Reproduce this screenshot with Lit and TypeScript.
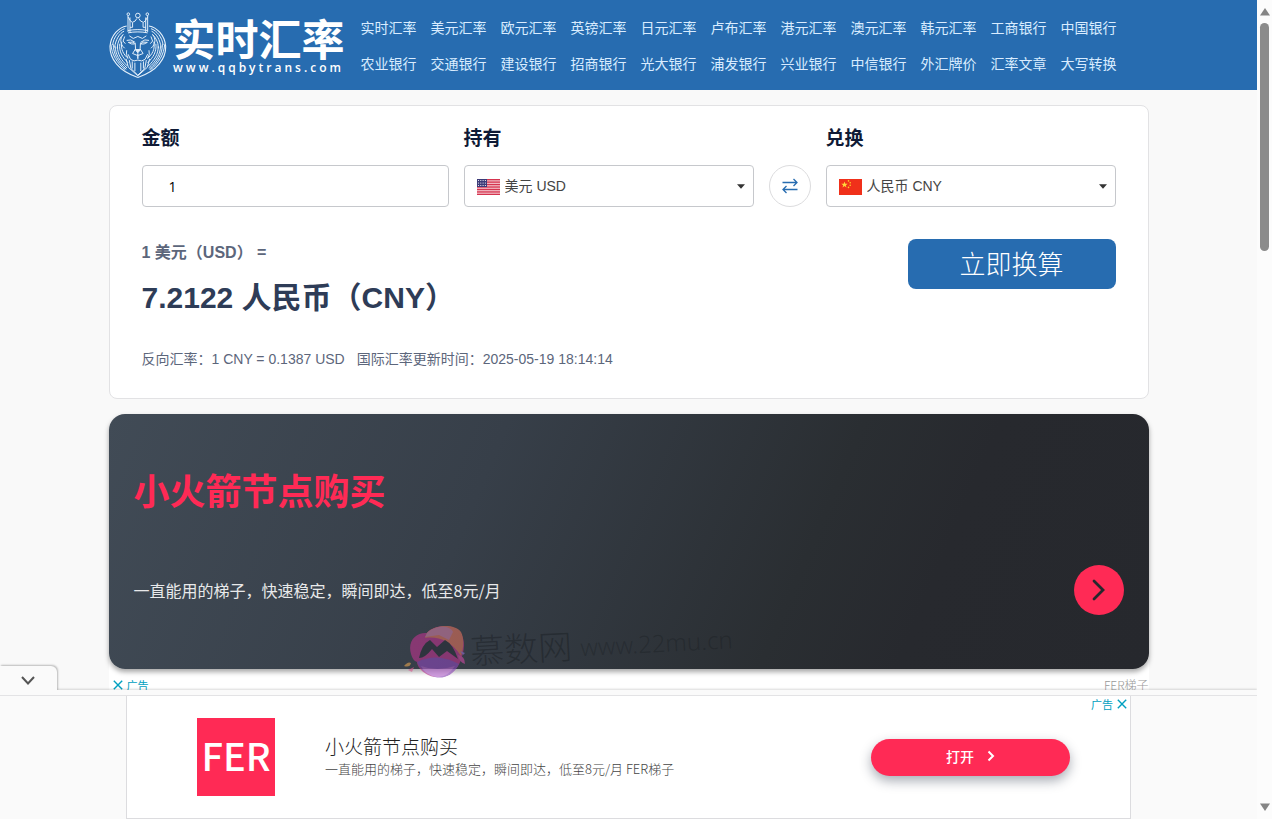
import { LitElement, html, css, svg } from "lit";
import { customElement, state } from "lit/decorators.js";

const NAV = [
  "实时汇率", "美元汇率", "欧元汇率", "英镑汇率", "日元汇率", "卢布汇率", "港元汇率", "澳元汇率", "韩元汇率", "工商银行", "中国银行",
  "农业银行", "交通银行", "建设银行", "招商银行", "光大银行", "浦发银行", "兴业银行", "中信银行", "外汇牌价", "汇率文章", "大写转换",
];

// Left half of the lion; the right half is the same drawing mirrored.
const lionHalf = svg`
  <path d="M88 98V52M82 96V46M88 82h8V68M82 92q14-3 30-3M82 99q14-3 30-3"/>
  <path d="M82 50q6 14 13 17 10-2 14-12"/>
  <circle cx="83" cy="42" r="4"/>
  <path d="M78 78C54 82 30 106 27 140C26 176 52 216 112 235" stroke-width="3.4"/>
  <path d="M72 86C54 92 38 112 35 136M70 94C56 100 44 120 41 144M68 103C58 112 50 126 49 146"/>
  <path d="M30 134c2 30 18 58 44 78M37 134c0 28 14 54 40 76M43 140c0 24 14 46 36 66M50 140c-1 24 12 42 30 60M57 132c-3 24 8 42 25 58M63 126c-4 24 5 38 20 52"/>
  <path d="M66 106c-8 10-8 22 0 34l6 6M72 110l-5 14 7 8"/>
  <path d="M78 122q12-6 26 6M83 128q10 7 19 5l-4-6z"/>
  <path d="M104 130l1 18-9 14 15 6M86 108l12 8 14-6"/>
  <path d="M112 162v16M112 182q-12 6-22-2l-8-16M78 152q-4 14 4 24"/>
  <path d="M86 182l5 26 21 20M95 186v22M103 190v26M76 178l7 26 29 26"/>`;

const lion = html`<svg class="lion" viewBox="24 34 177 204" aria-hidden="true">
  <g fill="none" stroke="#e6f1fb" stroke-width="3" stroke-linejoin="round">
    ${lionHalf}
    <g transform="translate(224 0) scale(-1 1)">${lionHalf}</g>
    <circle cx="112" cy="46" r="7"/>
    <path d="M104 150h16l-8 10z" fill="#e6f1fb"/>
  </g>
</svg>`;

const usFlag = html`<svg class="flag" viewBox="0 0 23 16" aria-hidden="true">
  <rect width="23" height="16" fill="#f4c4cc"/>
  ${[0, 1, 2, 3, 4, 5, 6].map((i) => svg`<rect y=${i * 2.46} width="23" height="1.3" fill="#d5344f"/>`)}
  <rect width="10" height="8" fill="#3c3b78"/>
  ${[1.5, 4, 6.5].map((y) => [1.5, 3.8, 6.1, 8.4].map((x) => svg`<circle cx=${x} cy=${y} r=".6" fill="#fff"/>`))}
</svg>`;

const cnFlag = html`<svg class="flag" viewBox="0 0 23 16" aria-hidden="true">
  <rect width="23" height="16" fill="#f0301a"/>
  <path d="M5.5 2.4l.8 2.3h2.4l-1.9 1.5.7 2.3-2-1.4-2 1.4.7-2.3-1.9-1.5h2.4z" fill="#ffd93a"/>
  <g fill="#ffc928"><circle cx="9.5" cy="1.9" r=".8"/><circle cx="11.2" cy="3.8" r=".8"/><circle cx="11.2" cy="6.3" r=".8"/><circle cx="9.5" cy="8.4" r=".8"/></g>
</svg>`;

const cross = html`<svg class="cross" viewBox="0 0 10 10" aria-hidden="true"><path d="M.8.8l8.4 8.4M9.2.8L.8 9.2" fill="none" stroke="#00a0c0" stroke-width="1.4"/></svg>`;

@customElement("app-root")
export class AppRoot extends LitElement {
  @state() private amount = "1";

  static styles = css`
    :host {
      display: grid;
      grid-template-columns: minmax(0, 1fr) 15px;
      position: relative;
      height: 100vh;
      overflow: hidden;
      background: #f9f9f9;
      color: #333;
      font: 14px/20px "Liberation Sans", "Noto Sans CJK SC", sans-serif;
    }
    * { box-sizing: border-box; }
    h2, p { margin: 0; }
    a { color: inherit; text-decoration: none; }
    button { font: inherit; cursor: pointer; }
    .page { min-width: 0; overflow: hidden; }
    .wrap { max-width: 1040px; margin: 0 auto; }

    header { background: #276cb0; }
    .bar { display: flex; min-height: 90px; }
    .brand { display: flex; align-items: flex-start; flex: none; padding-top: 11px; color: #fff; }
    .lion { width: 58px; height: 68px; }
    .words { display: flex; flex-direction: column; align-items: center; padding: 4px 0 0 6px; }
    .name { font: 700 43px/44px "Noto Sans CJK SC", sans-serif; }
    .domain { font: 600 12px/14px "Open Sans", sans-serif; letter-spacing: 3px; margin-top: 2px; }
    nav { display: flex; flex-wrap: wrap; align-content: flex-start; column-gap: 14px; padding: 10px 0 0 16px; }
    nav a { color: #d9ecff; font-size: 14px; line-height: 36px; }

    .card { margin-top: 15px; padding: 18px 32px 29px; border: 1px solid #e2e2e4; border-radius: 8px; background: #fff; }
    .fields { display: grid; grid-template-columns: minmax(0, 1fr) 290px 42px 290px; column-gap: 15px; align-items: end; }
    .field { display: grid; }
    .field label { color: #0f1a36; font-size: 19px; font-weight: 700; line-height: 30px; margin-bottom: 11px; }
    .field input, .field select {
      width: 100%; height: 42px; border: 1px solid #c6c8cc; border-radius: 4px; background: #fff;
      font: inherit; appearance: none; outline: none;
    }
    .field input { padding: 0 26px; color: #000; font-family: "Open Sans", sans-serif; }
    .field select { padding: 0 32px 0 40px; color: #444; }
    .box { position: relative; display: grid; }
    .flag { position: absolute; left: 13px; top: 14px; width: 23px; height: 16px; pointer-events: none; }
    .caret { position: absolute; right: 9px; top: 19px; width: 8px; height: 5px; pointer-events: none; }
    .swap { display: grid; place-items: center; width: 42px; height: 42px; padding: 0; border: 1px solid #dcdcde; border-radius: 50%; background: #fff; }
    .swap svg { width: 16px; height: 16px; }
    .result { display: flex; justify-content: space-between; align-items: flex-start; margin-top: 32px; }
    .from { color: #5c667b; font-size: 16px; font-weight: 700; line-height: 28px; }
    .to { color: #2e3c57; font-size: 30px; font-weight: 700; line-height: 44px; margin-top: 9px; }
    .rate { display: flex; flex-wrap: wrap; column-gap: 12px; margin-top: 29px; color: #5c667b; }
    .convert { width: 208px; height: 50px; padding: 0 0 2px; border: 0; border-radius: 8px; background: #276cb0; color: #fff; font: 300 26px/48px "Noto Sans CJK SC", sans-serif; }

    .promo { margin-top: 15px; background: #fff; border-radius: 16px 16px 0 0; font-family: "Noto Sans CJK SC", sans-serif; }
    .banner {
      position: relative; display: flex; flex-direction: column; min-height: 255px; padding: 48px 25px 20px; border-radius: 16px;
      background: linear-gradient(113deg, #414b56 0%, #373f49 35%, #2a2e32 66%, #27292e 78%, #26282d 100%);
      box-shadow: 0 3px 5px rgba(0, 0, 0, .35); color: #fff;
    }
    .banner h2 { color: #ff2a55; font-size: 36px; font-weight: 700; line-height: 54px; }
    .row { display: flex; justify-content: space-between; align-items: center; margin-top: 49px; font-size: 16px; color: #e8e9ea; }
    .go { display: grid; place-items: center; width: 50px; height: 50px; border-radius: 50%; background: #ff2a55; }
    .go svg { width: 14px; height: 22px; }
    .mark { position: absolute; left: 294px; top: 206px; width: 340px; height: 60px; pointer-events: none; }
    .meta { display: flex; justify-content: space-between; align-items: flex-start; padding: 8px 0 12px 4px; }
    .meta .by { color: #999; font-size: 12px; font-weight: 300; line-height: 16px; }
    .adtag { display: flex; align-items: center; gap: 4px; color: #00a0c0; font: 11px/16px "Noto Sans CJK SC", sans-serif; }
    .cross { width: 10px; height: 10px; }

    .dock { position: absolute; left: 0; right: 15px; bottom: 0; background: #fafafa; padding-top: 5px; box-shadow: 0 -1px 2px rgba(0, 0, 0, .15); clip-path: inset(-40px 0 0 0); }
    .toggle { position: absolute; left: 0; top: -24px; width: 57px; height: 25px; display: grid; place-items: center; padding: 4px 1px 0 0; border: 0; border-radius: 0 6px 0 0; background: #fafafa; box-shadow: 1px -1px 2px rgba(0, 0, 0, .25); clip-path: inset(-4px -4px 1px 0); }
    .toggle svg { width: 14px; height: 9px; }
    .slot { border-top: 1px solid #e3e3e5; }
    .strip {
      position: relative; display: flex; align-items: center; max-width: 1005px; height: 123px; margin: 0 auto; padding: 0 60px 0 70px;
      border: 1px solid #dcdcdf; border-top: 0; background: #fff; font-family: "Noto Sans CJK SC", sans-serif;
    }
    .tile { display: grid; place-items: center; flex: none; width: 78px; height: 78px; padding-bottom: 4px; background: #ff2a55; color: #fff; font-size: 38px; font-weight: 500; line-height: 74px; }
    .copy { flex: 1; padding: 0 0 2px 50px; }
    .copy h2 { color: #222; font-size: 19px; font-weight: 300; line-height: 26px; }
    .copy p { color: #444; font-size: 13px; font-weight: 300; line-height: 20px; }
    .open { display: flex; align-items: center; justify-content: center; gap: 13px; width: 199px; height: 37px; padding-bottom: 2px; border-radius: 19px; background: #ff2a55; color: #fff; font-weight: 500; box-shadow: 0 5px 12px rgba(40, 50, 70, .4); }
    .open svg { width: 8px; height: 12px; }
    .strip .adtag { position: absolute; right: 3px; top: 0; }

    .scroll { display: flex; flex-direction: column; align-items: center; padding: 8px 0; background: #fcfcfc; }
    .scroll svg { width: 10px; height: 8px; fill: #858585; }
    .thumb { width: 9px; height: 228px; margin: 7px 0 auto; border-radius: 5px; background: #8b8b8b; }
  `;

  private picker(id: string, label: string, flag: unknown, option: string) {
    return html`<div class="field">
      <label for=${id}>${label}</label>
      <div class="box">
        <select id=${id}><option>${option}</option></select>
        ${flag}
        <svg class="caret" viewBox="0 0 9 5" aria-hidden="true"><path d="M0 0h9L4.5 5z" fill="#333"/></svg>
      </div>
    </div>`;
  }

  render() {
    return html`
      <div class="page">
        <header>
          <div class="wrap bar">
            <a class="brand" href="#">${lion}
              <span class="words"><span class="name">实时汇率</span><span class="domain">www.qqbytrans.com</span></span>
            </a>
            <nav>${NAV.map((n) => html`<a href="#">${n}</a>`)}</nav>
          </div>
        </header>
        <main class="wrap">
          <section class="card">
            <div class="fields">
              <div class="field">
                <label for="amount">金额</label>
                <input id="amount" type="text" .value=${this.amount}
                  @input=${(e: Event) => (this.amount = (e.target as HTMLInputElement).value)} />
              </div>
              ${this.picker("have", "持有", usFlag, "美元 USD")}
              <button class="swap" aria-label="互换"><svg viewBox="0 0 16 16" fill="none" stroke="#276cb0" stroke-width="1.3"><path d="M.5 4.5h14M11.5 1L15 4.500 11.5 8M15.5 11.5h-14M4.500 8L1 11.500 4.500 15"/></svg></button>
              ${this.picker("want", "兑换", cnFlag, "人民币 CNY")}
            </div>
            <div class="result">
              <div>
                <p class="from">1 美元（USD） =</p>
                <p class="to">7.2122 人民币（CNY）</p>
              </div>
              <button class="convert">立即换算</button>
            </div>
            <p class="rate"><span>反向汇率：1 CNY = 0.1387 USD</span><span>国际汇率更新时间：2025-05-19 18:14:14</span></p>
          </section>
          <section class="promo">
            <div class="banner">
              <h2>小火箭节点购买</h2>
              <div class="row">
                <p>一直能用的梯子，快速稳定，瞬间即达，低至8元/月</p>
                <a class="go" href="#" aria-label="打开"><svg viewBox="0 0 14 22"><path d="M2 2l9 9-9 9" fill="none" stroke="#26282d" stroke-width="2.8" stroke-linecap="round"/></svg></a>
              </div>
              <svg class="mark" viewBox="0 0 340 60">
                <g opacity=".62">
                  <path d="M8 34C4 20 14 12 24 13C32 4 50 4 57 12C64 22 60 34 58 40C54 50 46 58 36 57C24 58 14 48 14 42C11 41 9 38 8 34Z" fill="#b8348c"/>
                  <path d="M24 13C32 4 52 4 58 12C62 20 60 30 58 36C48 20 34 16 22 18Z" fill="#d9705c"/>
                  <path d="M24 13C34 4 48 6 50 12L46 20L36 15L22 17Z" fill="#c87aa0"/>
                  <path d="M14 42q20-10 42 2C50 56 40 59 32 57Q18 52 14 42Z" fill="#8a48b8"/>
                  <path d="M18 46q16 6 34 0-8 12-18 11-12-2-16-11Z" fill="#b060c8"/>
                  <path d="M1 46q4-5 7-3-1 5-7 3Z" fill="#e0a050"/><path d="M5 50l6-3-2 5z" fill="#d85a90"/>
                  <path d="M55 35q7 1 7 9-6-2-7-9Z" fill="#c84aa0"/><path d="M57 31l5 2-2 2z" fill="#9070d0"/>
                </g>
                <path d="M16 38q3-14 11-18l7 7 8-7q8 4 13 19l-11-8-8 6-7-8q-7 9-13 9Z" fill="#2e343e"/>
                <g fill="#14181c" fill-opacity=".4" transform="rotate(-3 68 46)">
                  <text x="68" y="44" font-size="34" font-weight="300" font-family="Noto Sans CJK SC, sans-serif">慕数网</text>
                  <text x="178" y="42" font-size="24" fill-opacity=".3" font-family="Noto Sans, sans-serif" font-weight="300">www.22mu.cn</text>
                </g>
              </svg>
            </div>
            <div class="meta"><span class="adtag">${cross}广告</span><span class="by">FER梯子</span></div>
          </section>
        </main>
      </div>
      <div class="scroll" aria-hidden="true">
        <svg viewBox="0 0 10 8"><path d="M5 0l5 7.5H0z"/></svg>
        <div class="thumb"></div>
        <svg viewBox="0 0 10 8"><path d="M5 8L0 .5h10z"/></svg>
      </div>
      <aside class="dock">
        <button class="toggle" aria-label="收起"><svg viewBox="0 0 14 9"><path d="M1 1l6 6.500L13 1" fill="none" stroke="#555" stroke-width="2"/></svg></button>
        <div class="slot">
          <div class="strip">
            <div class="tile">FER</div>
            <div class="copy">
              <h2>小火箭节点购买</h2>
              <p>一直能用的梯子，快速稳定，瞬间即达，低至8元/月 FER梯子</p>
            </div>
            <a class="open" href="#">打开<svg viewBox="0 0 8 12"><path d="M1.5 1.5L6 6l-4.500 4.500" fill="none" stroke="#fff" stroke-width="2"/></svg></a>
            <span class="adtag">广告${cross}</span>
          </div>
        </div>
      </aside>
    `;
  }
}
